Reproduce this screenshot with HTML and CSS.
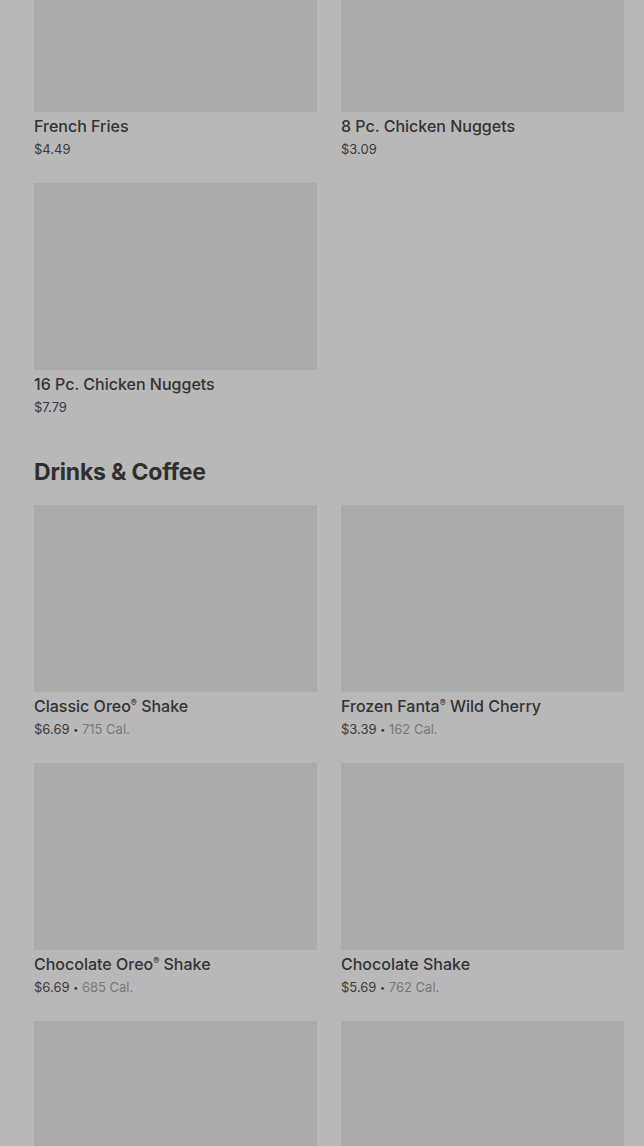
FILE: index.html
```html
<!DOCTYPE html>
<html lang="en">

<head>
    <meta charset="UTF-8">
    <meta name="viewport" content="width=device-width, initial-scale=1.0">
    <title>Menu</title>
    <link rel="stylesheet" href="styles.css">
</head>

<body>
    <main class="menu">
        <!-- Sides (scrolled past the header) -->
        <section class="section">
            <div class="grid">
                <div class="item">
                    <div class="item-img"></div>
                    <div class="item-name">French Fries</div>
                    <div class="item-meta">$4.49</div>
                </div>
                <div class="item">
                    <div class="item-img"></div>
                    <div class="item-name">8 Pc. Chicken Nuggets</div>
                    <div class="item-meta">$3.09</div>
                </div>
                <div class="item">
                    <div class="item-img"></div>
                    <div class="item-name">16 Pc. Chicken Nuggets</div>
                    <div class="item-meta">$7.79</div>
                </div>
            </div>
        </section>

        <section class="section">
            <h2 class="section-title">Drinks &amp; Coffee</h2>
            <div class="grid">
                <div class="item">
                    <div class="item-img"></div>
                    <div class="item-name">Classic Oreo<sup>®</sup> Shake</div>
                    <div class="item-meta">$6.69 <span class="dot">•</span> <span class="cal">715 Cal.</span></div>
                </div>
                <div class="item">
                    <div class="item-img"></div>
                    <div class="item-name">Frozen Fanta<sup>®</sup> Wild Cherry</div>
                    <div class="item-meta">$3.39 <span class="dot">•</span> <span class="cal">162 Cal.</span></div>
                </div>
                <div class="item">
                    <div class="item-img"></div>
                    <div class="item-name">Chocolate Oreo<sup>®</sup> Shake</div>
                    <div class="item-meta">$6.69 <span class="dot">•</span> <span class="cal">685 Cal.</span></div>
                </div>
                <div class="item">
                    <div class="item-img"></div>
                    <div class="item-name">Chocolate Shake</div>
                    <div class="item-meta">$5.69 <span class="dot">•</span> <span class="cal">762 Cal.</span></div>
                </div>
                <div class="item">
                    <div class="item-img"></div>
                </div>
                <div class="item">
                    <div class="item-img"></div>
                </div>
            </div>
        </section>
    </main>
</body>

</html>
```

FILE: styles.css
```css
* {
    margin: 0;
    padding: 0;
    box-sizing: border-box;
}

body {
    font-family: Inter, 'Noto Sans', sans-serif;
    background-color: #b8b8b8;
    color: #333;
    overflow: hidden;
}

.menu {
    padding: 0 20px 0 34px;
    margin-top: -75.5px;
}

.section-title {
    font-size: 23px;
    font-weight: 700;
    line-height: 32px;
    letter-spacing: -0.2px;
    color: #2f2f2f;
    margin: 40px 0 16.5px;
}

.grid {
    display: grid;
    grid-template-columns: 1fr 1fr;
    column-gap: 24px;
    row-gap: 24.5px;
}

.item-img {
    height: 187.5px;
    background-color: #aaaaaa;
}

.item-name {
    font-size: 16px;
    font-weight: 500;
    line-height: 20px;
    height: 20px;
    margin-top: 4px;
    color: #333;
}

.item-name sup {
    font-size: 9px;
    line-height: 0;
    vertical-align: baseline;
    position: relative;
    top: -6px;
}

.item-meta {
    font-size: 13px;
    line-height: 18px;
    height: 18px;
    margin-top: 4px;
    color: #3a3a3a;
}

.dot {
    font-size: 9px;
    line-height: 0;
    vertical-align: 1px;
}

.cal {
    color: #777;
}
```
